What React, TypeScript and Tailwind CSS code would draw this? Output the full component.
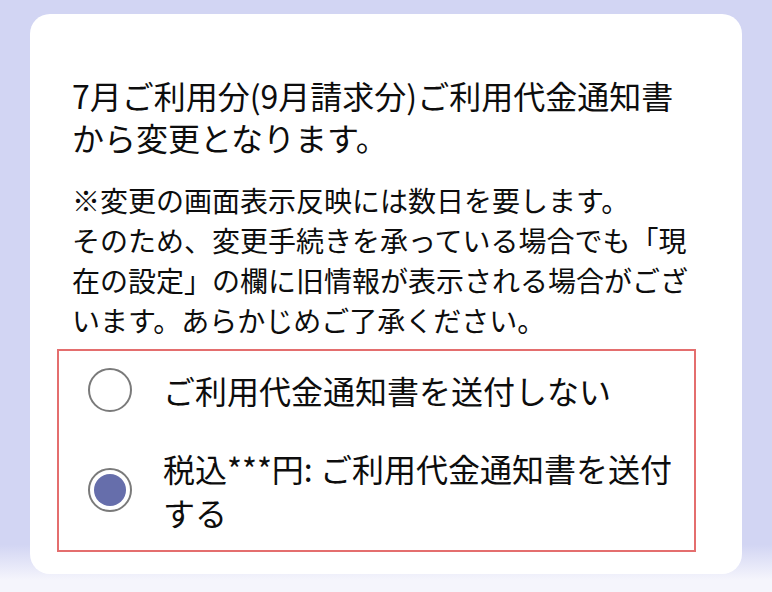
const OPTIONS = [
  { id: "none", label: "ご利用代金通知書を送付しない", checked: false },
  { id: "paid", label: "税込***円: ご利用代金通知書を送付する", checked: true },
];

function Radio({ checked }: { checked: boolean }) {
  return (
    <span className="flex h-[44px] w-[44px] shrink-0 items-center justify-center rounded-full border-2 border-[#7a7a7a] bg-white">
      {checked ? <span className="h-[32px] w-[32px] rounded-full bg-[#666eab]" /> : null}
    </span>
  );
}

export default function App() {
  return (
    <div className="h-[592px] overflow-hidden bg-[linear-gradient(to_bottom,#d2d5f3_0%,#d2d5f3_92%,#f5f5fc_98%)] px-[30px] pt-[14px] font-['Noto_Sans_CJK_JP',sans-serif] text-[#0d0d0d]">
      <div className="rounded-[20px] bg-white px-[42px] pb-[22px] pt-[60px]">
        <h2 className="text-[32px] font-normal leading-[42px]">
          7月ご利用分(9月請求分)ご利用代金通知書から変更となります。
        </h2>
        <p className="mt-[22px] text-[28px] leading-[40px]">
          ※変更の画面表示反映には数日を要します。
          <br />
          そのため、変更手続きを承っている場合でも「現在の設定」の欄に旧情報が表示される場合がございます。あらかじめご了承ください。
        </p>

        <div className="ml-[-15px] mt-[9px] w-[639px] border-2 border-[#e46e6e] pb-[16px] pl-[29px] pr-[4px] pt-[17px]">
          <div className="space-y-[34px]">
            {OPTIONS.map((option) => (
              <label key={option.id} className="flex items-center gap-[31px]">
                <Radio checked={option.checked} />
                <span className="text-[32px] leading-[44px]">{option.label}</span>
              </label>
            ))}
          </div>
        </div>
      </div>
    </div>
  );
}
